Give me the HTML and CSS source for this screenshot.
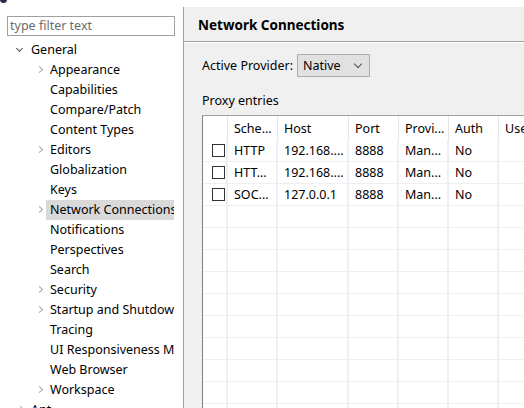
FILE: index.html
```html
<!DOCTYPE html>
<html>
<head>
<meta charset="utf-8">
<link rel="stylesheet" href="styles.css">
</head>
<body>
<div class="window">
  <div class="left">
    <div class="topicon"></div>
    <div class="filter">type filter text</div>
    <div class="tree">
      <div class="row lvl0"><span class="chev down"></span>General</div>
      <div class="row lvl1"><span class="chev"></span>Appearance</div>
      <div class="row lvl1"><span class="nochev"></span>Capabilities</div>
      <div class="row lvl1"><span class="nochev"></span>Compare/Patch</div>
      <div class="row lvl1"><span class="nochev"></span>Content Types</div>
      <div class="row lvl1"><span class="chev"></span>Editors</div>
      <div class="row lvl1"><span class="nochev"></span>Globalization</div>
      <div class="row lvl1"><span class="nochev"></span>Keys</div>
      <div class="row lvl1"><span class="chev"></span><span class="sel">Network Connections</span></div>
      <div class="row lvl1"><span class="nochev"></span>Notifications</div>
      <div class="row lvl1"><span class="nochev"></span>Perspectives</div>
      <div class="row lvl1"><span class="nochev"></span>Search</div>
      <div class="row lvl1"><span class="chev"></span>Security</div>
      <div class="row lvl1"><span class="chev"></span>Startup and Shutdown</div>
      <div class="row lvl1"><span class="nochev"></span>Tracing</div>
      <div class="row lvl1"><span class="nochev"></span>UI Responsiveness Monitoring</div>
      <div class="row lvl1"><span class="nochev"></span>Web Browser</div>
      <div class="row lvl1"><span class="chev"></span>Workspace</div>
      <div class="row lvl0"><span class="chev"></span>Ant</div>
    </div>
  </div>
  <div class="right">
    <div class="header">Network Connections</div>
    <div class="content">
      <div class="provider">
        <span>Active Provider:</span>
        <div class="select"><span>Native</span><span class="selchev"></span></div>
      </div>
      <div class="label">Proxy entries</div>
      <div class="tablewrap">
        <table class="grid">
          <colgroup>
            <col class="c0"><col class="c1"><col class="c2"><col class="c3"><col class="c4"><col class="c5"><col class="c6">
          </colgroup>
          <thead>
            <tr><th></th><th>Sche...</th><th>Host</th><th>Port</th><th>Provi...</th><th>Auth</th><th>User</th></tr>
          </thead>
          <tbody>
            <tr><td><span class="cb"></span></td><td>HTTP</td><td>192.168....</td><td>8888</td><td>Man...</td><td>No</td><td></td></tr>
            <tr><td><span class="cb"></span></td><td>HTT...</td><td>192.168....</td><td>8888</td><td>Man...</td><td>No</td><td></td></tr>
            <tr><td><span class="cb"></span></td><td>SOC...</td><td>127.0.0.1</td><td>8888</td><td>Man...</td><td>No</td><td></td></tr>
            <tr><td></td><td></td><td></td><td></td><td></td><td></td><td></td></tr>
            <tr><td></td><td></td><td></td><td></td><td></td><td></td><td></td></tr>
            <tr><td></td><td></td><td></td><td></td><td></td><td></td><td></td></tr>
            <tr><td></td><td></td><td></td><td></td><td></td><td></td><td></td></tr>
            <tr><td></td><td></td><td></td><td></td><td></td><td></td><td></td></tr>
            <tr><td></td><td></td><td></td><td></td><td></td><td></td><td></td></tr>
            <tr><td></td><td></td><td></td><td></td><td></td><td></td><td></td></tr>
            <tr><td></td><td></td><td></td><td></td><td></td><td></td><td></td></tr>
            <tr><td></td><td></td><td></td><td></td><td></td><td></td><td></td></tr>
            <tr><td></td><td></td><td></td><td></td><td></td><td></td><td></td></tr>
          </tbody>
        </table>
      </div>
    </div>
  </div>
</div>
</body>
</html>
```
FILE: styles.css
```css
html, body {
  margin: 0;
  padding: 0;
  background: #ffffff;
}
body {
  font-family: "Noto Sans", "Open Sans", sans-serif;
  font-size: 12px;
  color: #000000;
}
.window {
  display: flex;
  width: 524px;
  height: 408px;
  overflow: hidden;
}
.left {
  width: 183px;
  flex: none;
  background: #ffffff;
  overflow: hidden;
}
.topicon {
  width: 7px;
  height: 7px;
  margin-top: -4px;
  margin-left: 0px;
  border-radius: 50%;
  background: #2b2b4a;
}
.filter {
  margin: 13px 0 0 7px;
  width: 164px;
  height: 18px;
  border: 1px solid #a0a0a0;
  color: #6d6d6d;
  line-height: 18px;
  padding-left: 2px;
  box-sizing: content-box;
  font-size: 12.5px;
  white-space: nowrap;
  overflow: hidden;
}
.tree {
  margin-top: 4px;
  width: 174px;
  overflow: hidden;
}
.row {
  height: 20px;
  line-height: 20px;
  display: flex;
  align-items: center;
  white-space: nowrap;
  font-size: 12.5px;
}
.lvl0 { padding-left: 14px; }
.lvl1 { padding-left: 33px; }
.chev, .nochev {
  width: 17px;
  height: 20px;
  flex: none;
  position: relative;
}
.chev::before {
  content: "";
  position: absolute;
  left: 4px;
  top: 7px;
  width: 4px;
  height: 4px;
  border-right: 1.3px solid #a6a6a6;
  border-bottom: 1.3px solid #a6a6a6;
  transform: rotate(-45deg);
}
.chev.down::before {
  left: 3px;
  top: 6px;
  border-color: #505050;
  transform: rotate(45deg);
}
.sel {
  background: #d9d9d9;
  padding: 0 4px 0 4px;
  margin-left: -4px;
  height: 20px;
  line-height: 20px;
  flex: 1;
}
.right {
  flex: 1;
  margin-top: 7px;
  background: #f0f0f0;
  border-left: 1px solid #a0a0a0;
  display: flex;
  flex-direction: column;
  overflow: hidden;
}
.header {
  height: 34px;
  line-height: 36px;
  padding-left: 14px;
  font-weight: bold;
  font-size: 13.5px;
  border-bottom: 1px solid #a0a0a0;
  box-shadow: 0 1px 0 #ffffff;
  flex: none;
  white-space: nowrap;
}
.content {
  padding-left: 18px;
  flex: 1;
  overflow: hidden;
}
.provider {
  display: flex;
  align-items: center;
  margin-top: 12px;
  height: 23px;
  font-size: 12.5px;
}
.select {
  margin-left: 4px;
  height: 21px;
  border: 1px solid #adadad;
  background: #e1e1e1;
  display: flex;
  align-items: center;
  justify-content: space-between;
  padding-left: 5px;
  box-sizing: content-box;
  width: 66px;
}
.selchev {
  width: 5px;
  height: 5px;
  border-right: 1px solid #505050;
  border-bottom: 1px solid #505050;
  transform: rotate(45deg);
  margin-right: 8px;
  margin-top: -4px;
}
.label {
  margin-top: 14px;
  height: 20px;
  line-height: 20px;
  font-size: 12.5px;
}
.tablewrap {
  margin-top: 4px;
  width: 400px;
  border-top: 1px solid #a0a0a0;
  border-left: 1px solid #828282;
  background: #ffffff;
  height: 320px;
}
.grid {
  table-layout: fixed;
  border-collapse: separate;
  border-spacing: 0;
  width: 380px;
  font-size: 12.5px;
}
.c0 { width: 25px; }
.c1 { width: 50px; }
.c2 { width: 71px; }
.c3 { width: 50px; }
.c4 { width: 50px; }
.c5 { width: 50px; }
.c6 { width: 84px; }
.grid th {
  height: 24px;
  padding: 0 0 0 6px;
  text-align: left;
  font-weight: normal;
  border-right: 1px solid #e5e5e5;
  white-space: nowrap;
  overflow: hidden;
  box-sizing: border-box;
}
.grid td {
  height: 22px;
  padding: 0 0 0 6px;
  border-right: 2px solid #ebeff6;
  border-bottom: 1px solid #efefef;
  white-space: nowrap;
  overflow: hidden;
  box-sizing: border-box;
}
.grid td:first-child {
  padding-left: 9px;
}
.cb {
  display: block;
  width: 11px;
  height: 11px;
  border: 1px solid #333333;
  background: #ffffff;
}
```
